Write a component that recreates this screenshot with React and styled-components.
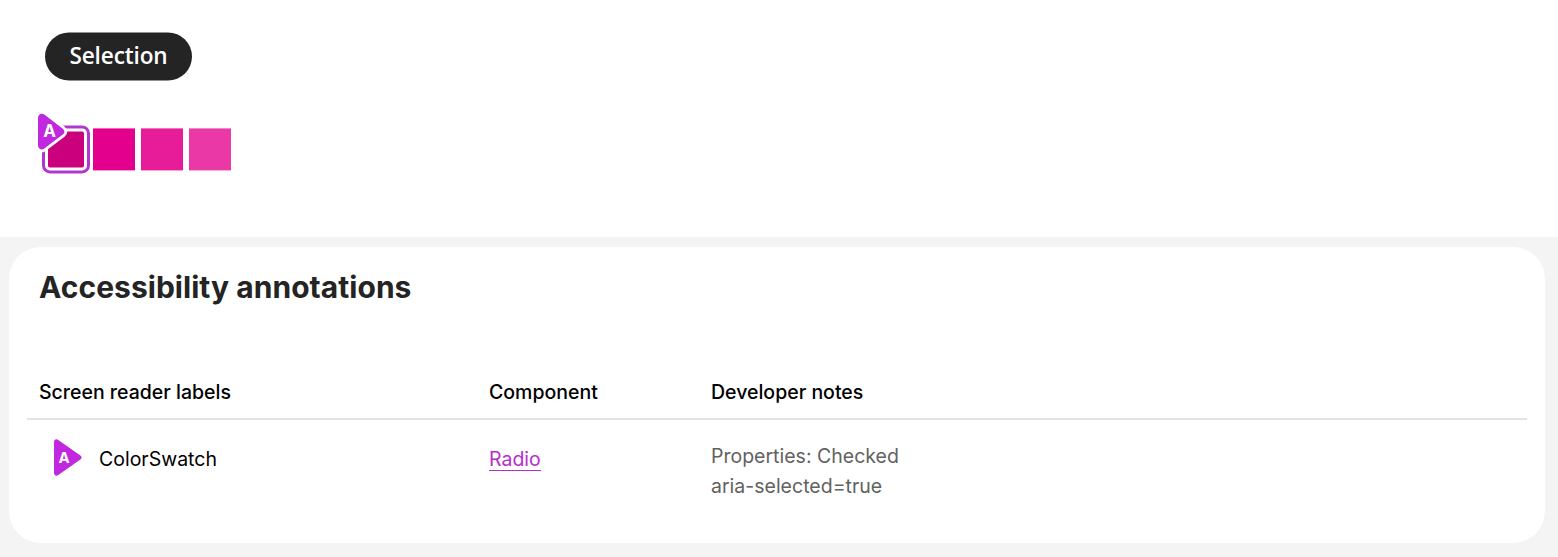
import React from "react";
import styled, { createGlobalStyle } from "styled-components";

const GlobalStyle = createGlobalStyle`
  * { box-sizing: border-box; }
  body { margin: 0; background: #fff; font-family: Inter, "Liberation Sans", sans-serif; }
`;

const Page = styled.main`
  display: flex;
  flex-direction: column;
  height: 557px;
  overflow: hidden;
`;

const Preview = styled.section`
  flex: none;
  height: 237px;
  padding: 32px 0 0 45px;
`;

const Pill = styled.div`
  width: 147px;
  height: 48px;
  display: flex;
  align-items: center;
  justify-content: center;
  border-radius: 24px;
  background: #242424;
  color: #fff;
  font: 600 22.6px/46px "Open Sans", "Noto Sans", sans-serif;
  padding-bottom: 2px;
  letter-spacing: -0.15px;
  transform: translateY(0.5px);
  white-space: nowrap;
`;

const Swatches = styled.div`
  display: flex;
  gap: 6px;
  margin-top: 48px;
  transform: translateY(0.4px);
`;

const Swatch = styled.div`
  position: relative;
  width: 42px;
  height: 42px;
  background: ${(p) => p.$color};
  ${(p) => p.$selected && `
    border: 3px solid #fff;
    border-radius: 5px;
    box-shadow: 0 0 0 3px #b136d0;
  `}
`;

const MarkerIcon = styled.svg`
  display: block;
  flex: none;
  width: 28px;
  height: 37px;
  overflow: visible;
`;

const PinnedMarker = styled.div`
  position: absolute;
  left: -10px;
  top: -18px;
`;

const MarkerLetter = styled.text`
  font: 700 ${(p) => p.$size}px Inter, sans-serif;
  fill: #fff;
  text-anchor: middle;
`;

const Panel = styled.section`
  flex: 1;
  padding: 10px 13px 14px 9px;
  background: #f4f4f4;
`;

const Card = styled.div`
  height: 296px;
  padding: 20px 18px 0;
  border-radius: 32px;
  background: #fff;
`;

const Title = styled.h1`
  margin: 0 0 0 12px;
  font-size: 30px;
  font-weight: 700;
  line-height: 40px;
  letter-spacing: 0.04px;
  color: #242424;
`;

const Row = styled.div`
  display: grid;
  grid-template-columns: 450px 222px 1fr;
  padding-left: 12px;
`;

const HeaderRow = styled(Row)`
  margin-top: 62px;
  height: 51px;
  border-bottom: 2px solid #e3e3e3;
  font-size: 19.5px;
  font-weight: 500;
  line-height: 46px;
  color: #000;
`;

const LabelCell = styled.div`
  display: flex;
  align-items: center;
  gap: 17px;
  height: 37px;
  margin-top: 19px;
  padding-left: 15px;
  font-size: 19.5px;
  color: #000;
`;

const LabelText = styled.span`
  padding-top: 2px;
`;

const LinkCell = styled.div`
  margin-top: 26px;
`;

const Link = styled.a`
  display: inline-block;
  height: 25px;
  border-bottom: 1.5px solid #b52fcb;
  color: #b52fcb;
  font-size: 19.5px;
  line-height: 26px;
`;

const Notes = styled.p`
  margin: 21px 0 0;
  font-size: 19.5px;
  line-height: 30px;
  color: #616161;
`;

const TRIANGLE = "M0 3.2C0 .6 2.3-.5 4.3 1.1L26.4 16.5C28 17.7 28 19.3 26.4 20.5L4.3 35.9C2.3 37.5 0 36.4 0 33.8Z";
const PINNED_TRIANGLE = "M0 4.5C0 .8 3.6-.9 6.3 1.2L24.8 15.4C27 17.2 27 19.4 24.8 21.2L6.3 35.2C3.6 37.3 0 35.6 0 31.9Z";

function Marker({ outlined }) {
  return (
    <MarkerIcon viewBox="0 0 28 37" aria-label="A">
      {outlined && <path d={PINNED_TRIANGLE} fill="#fff" stroke="#fff" strokeWidth="5.6" strokeLinejoin="round" />}
      <path d={outlined ? PINNED_TRIANGLE : TRIANGLE} fill="#c127df" />
      <MarkerLetter x={outlined ? 11.5 : 10} y={outlined ? 23.8 : 23.5} $size={outlined ? 17 : 15}>A</MarkerLetter>
    </MarkerIcon>
  );
}

const colors = ["#ca007d", "#e3008c", "#e61c99", "#ea38a6"];

export default function App() {
  return (
    <Page>
      <GlobalStyle />
      <Preview>
        <Pill><span>Selection</span></Pill>
        <Swatches>
          {colors.map((color, i) => (
            <Swatch key={color} $color={color} $selected={i === 0}>
              {i === 0 && <PinnedMarker><Marker outlined /></PinnedMarker>}
            </Swatch>
          ))}
        </Swatches>
      </Preview>
      <Panel>
        <Card>
          <Title>Accessibility annotations</Title>
          <HeaderRow>
            <span>Screen reader labels</span>
            <span>Component</span>
            <span>Developer notes</span>
          </HeaderRow>
          <Row>
            <LabelCell><Marker /><LabelText>ColorSwatch</LabelText></LabelCell>
            <LinkCell><Link>Radio</Link></LinkCell>
            <Notes>Properties: Checked<br />aria-selected=true</Notes>
          </Row>
        </Card>
      </Panel>
    </Page>
  );
}
